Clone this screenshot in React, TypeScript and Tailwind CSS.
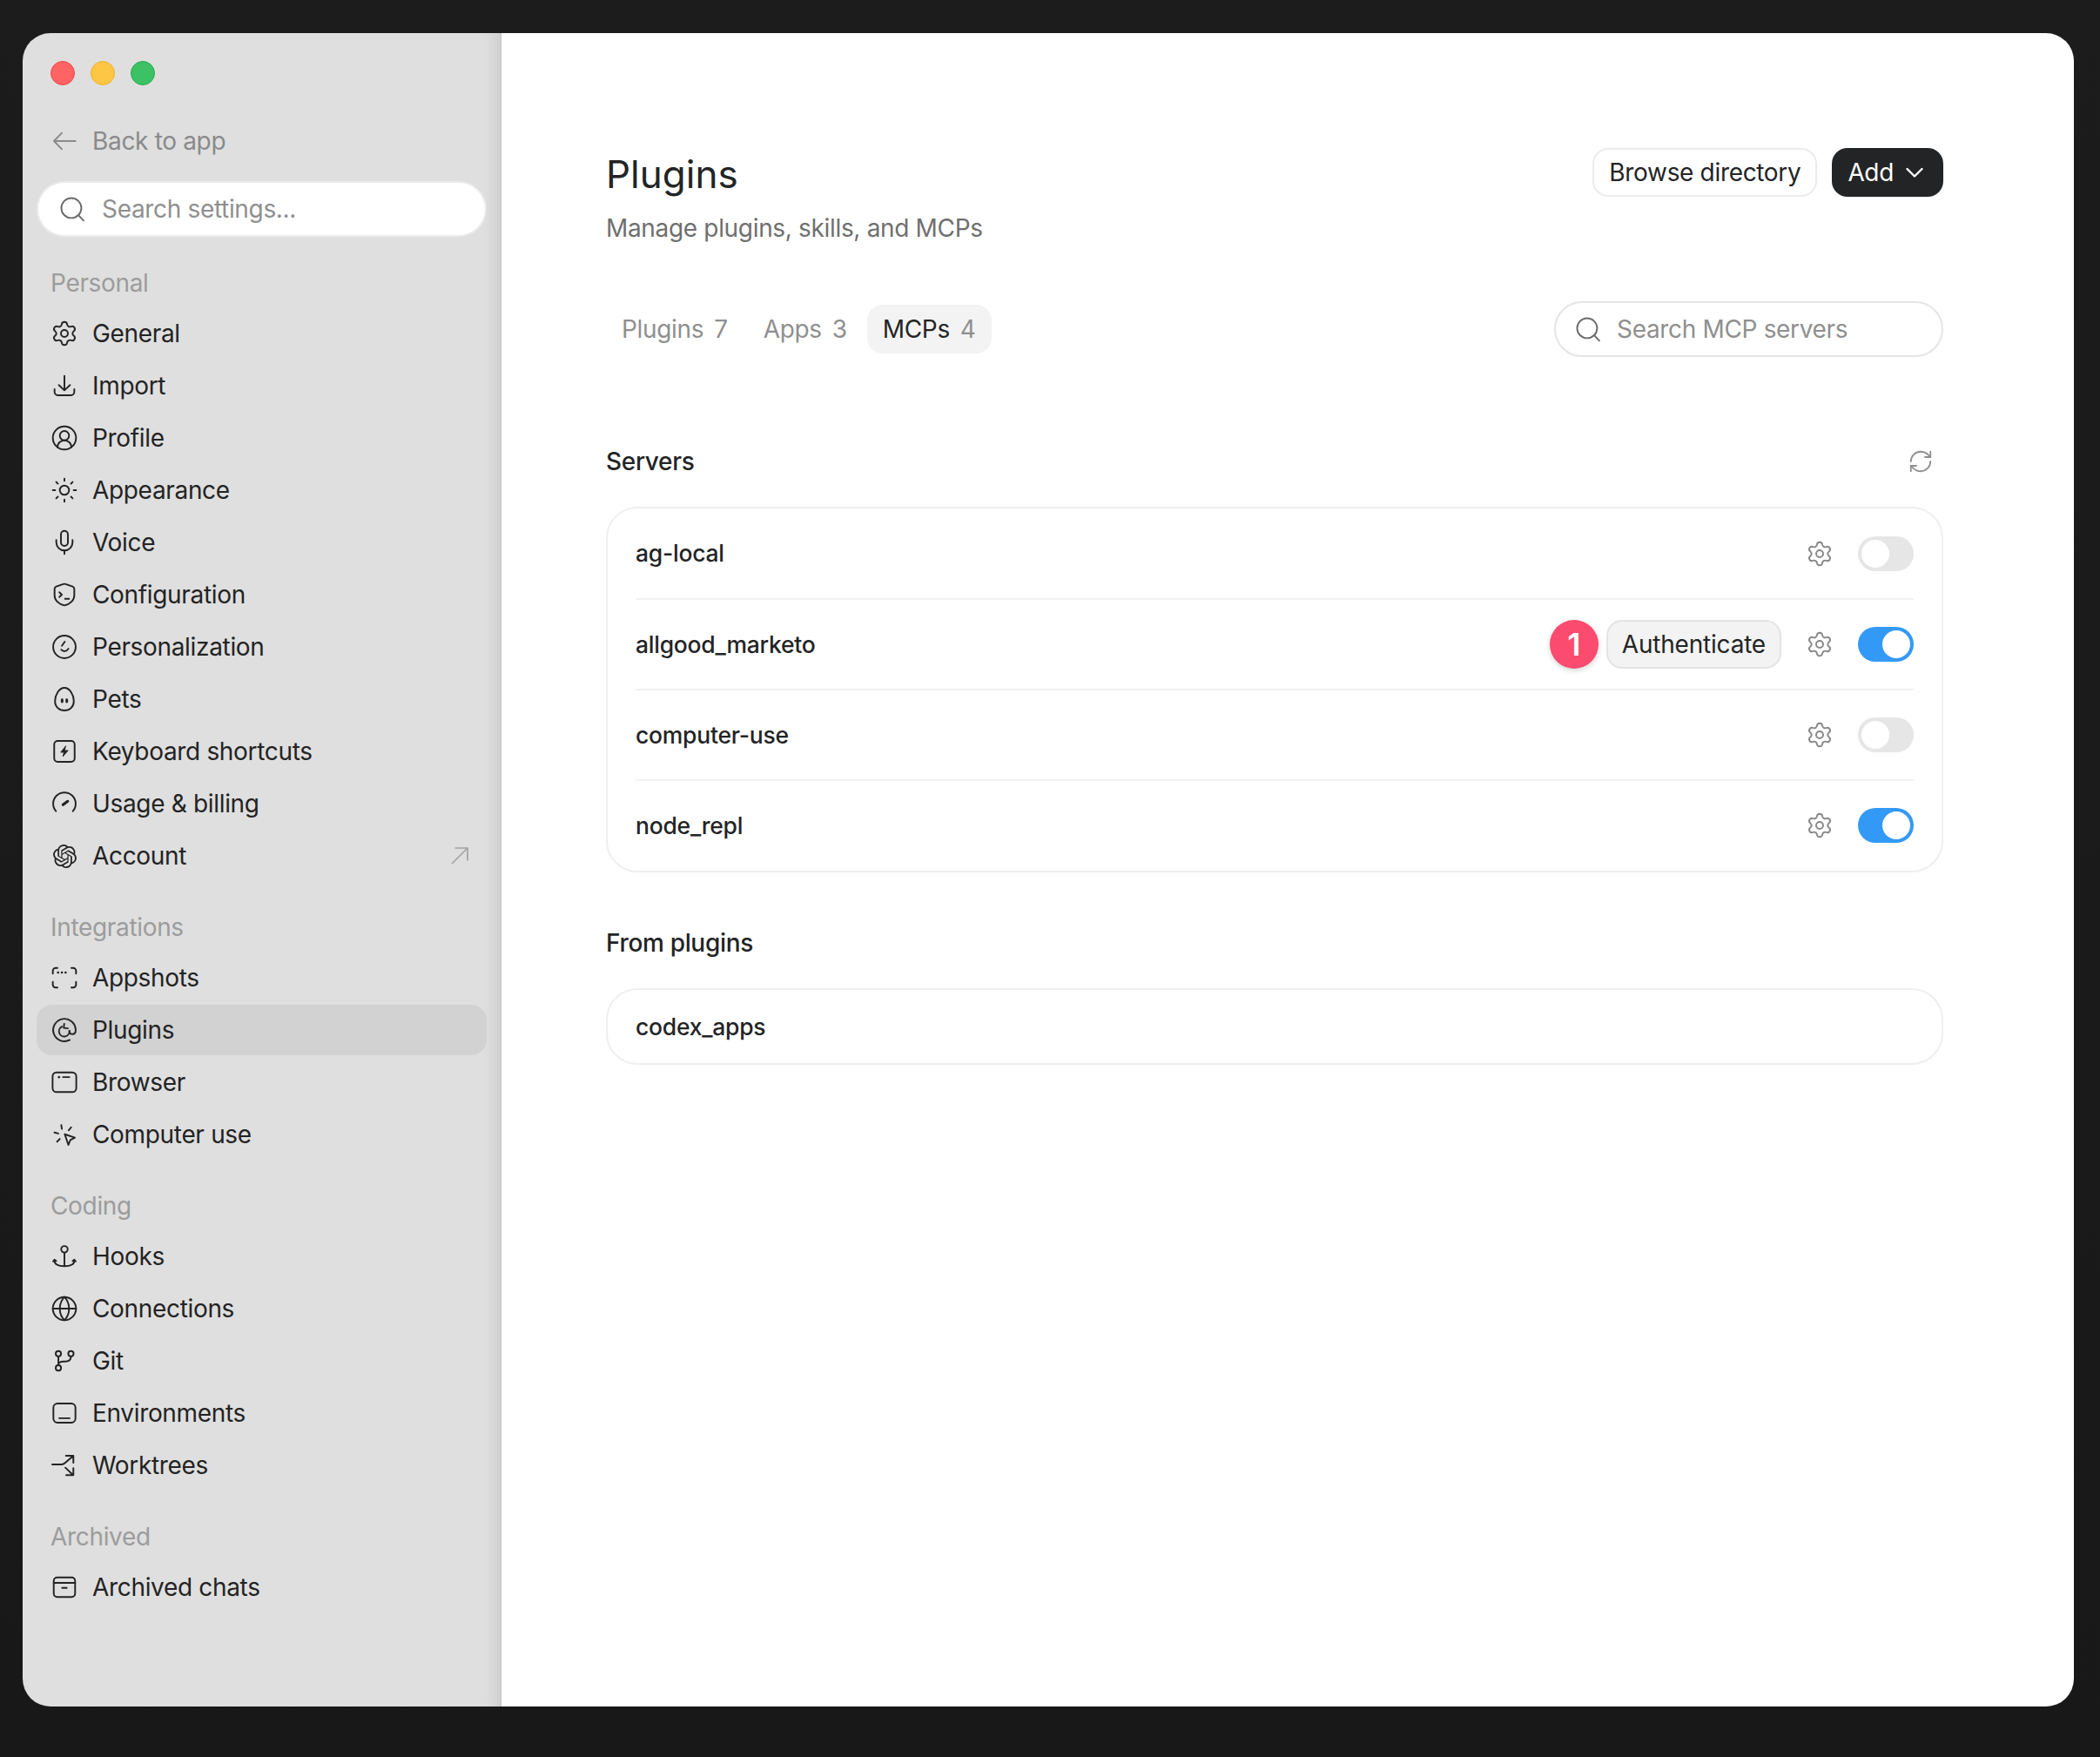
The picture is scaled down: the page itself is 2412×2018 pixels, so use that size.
import type { ReactNode } from "react";
import { Settings, CircleUserRound, Sun, Mic, Globe, RefreshCw } from "lucide-react";
import { SiOpenai } from "react-icons/si";

// hand drawn icons, same 24 box as lucide
function Ico({ children, className = "" }: { children: ReactNode; className?: string }) {
  return (
    <svg
      viewBox="0 0 24 24"
      fill="none"
      stroke="currentColor"
      strokeWidth={1.45}
      strokeLinecap="round"
      strokeLinejoin="round"
      className={`h-[32px] w-[32px] shrink-0 ${className}`}
    >
      {children}
    </svg>
  );
}

const lucideProps = { size: 32, strokeWidth: 1.45, className: "shrink-0" };

const icons: Record<string, ReactNode> = {
  general: <Settings {...lucideProps} />,
  import: (
    <Ico>
      <path d="M12 3.5V16M7.2 11.4 12 16l4.8-4.6M3.5 15v2.5a2.8 2.8 0 0 0 2.8 2.7h11.4a2.8 2.8 0 0 0 2.8-2.7V15" />
    </Ico>
  ),
  profile: <CircleUserRound {...lucideProps} />,
  appearance: <Sun {...lucideProps} />,
  voice: <Mic {...lucideProps} />,
  config: (
    <Ico>
      <path d="M11 2.9a3 3 0 0 1 2 0l6 2.1c1 .4 1.5 1.1 1.5 2.1v5.4c0 4.6-4 7.6-8.5 8.8-4.5-1.2-8.5-4.2-8.5-8.8V7.1c0-1 .5-1.7 1.5-2.1z" />
      <path d="m7.6 10 2.2 2-2.2 2M12.5 15.5H16" />
    </Ico>
  ),
  personalization: (
    <Ico>
      <circle cx="12" cy="12" r="9.7" />
      <path d="m12.3 7.5-2.5 3.6M9.2 14.4c1.8 2 4.8 1.6 6.2-.8" />
    </Ico>
  ),
  pets: (
    <Ico>
      <path d="M12 2.2c4.6 0 8.1 6.2 8.1 11.4 0 5.1-3.6 8.2-8.1 8.2s-8.1-3.1-8.1-8.2C3.9 8.400 7.400 2.200 12 2.200z" />
      <path d="M10 12.600v1.600M14 12.600v1.600" strokeWidth={2.2} />
    </Ico>
  ),
  keyboard: (
    <Ico>
      <rect x="3.2" y="3" width="17.6" height="18" rx="3" />
      <path d="M13 7.5 8.8 12.8h2.8l-1 3.7 4.6-5.3h-2.8z" fill="currentColor" strokeWidth={0.6} />
    </Ico>
  ),
  usage: (
    <Ico>
      <path d="M4.7 18.5a9.700 9.700 0 1 1 14.600 0" />
      <path d="m10.8 13 4-3" strokeWidth={2.4} />
    </Ico>
  ),
  account: <SiOpenai size={27} className="mx-[2.5px] shrink-0" />,
  appshots: (
    <Ico>
      <path d="M2 8.5V6a2.5 2.5 0 0 1 2.5-2.5H6M18 3.5h1.5A2.5 2.5 0 0 1 22 6v2.500M2 15.500V18a2.500 2.500 0 0 0 2.500 2.500H6M22 15.500V18a2.500 2.500 0 0 1-2.500 2.500H18" />
      <path d="M6.5 7.5h.01M9.8 7.5h.01M13 7.5h.01" strokeWidth={2} />
    </Ico>
  ),
  plugins: (
    <Ico>
      <path d="M16.6 20.6A9.700 9.700 0 1 1 21.700 12c0 2.100-1 3.600-2.700 3.600-1.500 0-2.700-1.100-2.700-2.900" />
      <path d="M9.800 9.100A4.500 4.500 0 1 0 16.300 12.700M11.800 6.800l-.4 3.400 3.500.4" />
    </Ico>
  ),
  browser: (
    <Ico>
      <rect x="1.8" y="3.5" width="20.4" height="17" rx="3.5" />
      <path d="M7.3 7.6h.01" strokeWidth={1.9} />
      <path d="M10.8 7.6h5.4" />
    </Ico>
  ),
  computer: (
    <Ico>
      <path d="M12.3 11.8 21 14.7l-3.9 2-1.700 4.300z" />
      <path d="m9.300 3.900.5 3.300M17.800 5.800l-2.100 2.600M3.400 10.300l3.300.9M8 15.800l-2.300 2.400" />
    </Ico>
  ),
  hooks: (
    <Ico>
      <circle cx="12" cy="5.9" r="2.8" />
      <path d="M12 8.700v11.800M3.400 15c-.3 3.700 3 5.500 8.600 5.500s8.900-1.800 8.600-5.500M2.300 16.300l1.100-1.400 1.500 1.100M19.100 16l1.500-1.100 1.100 1.400" />
    </Ico>
  ),
  connections: <Globe {...lucideProps} />,
  git: (
    <Ico>
      <circle cx="6.8" cy="5.9" r="2.3" />
      <circle cx="6.8" cy="18.1" r="2.3" />
      <circle cx="17.6" cy="5.9" r="2.3" />
      <path d="M6.800 8.200v7.600M17.600 8.200c0 3-2 4.300-4.800 4.300h-1.500c-2.400 0-3.900.6-4.500 2.200" />
    </Ico>
  ),
  environments: (
    <Ico>
      <rect x="2.5" y="3.8" width="19" height="16.4" rx="3.5" />
      <path d="M7.5 16.4h9" />
    </Ico>
  ),
  worktrees: (
    <Ico>
      <path d="M1.500 11.200h8c1.300 0 2.200-.5 3-1.300l7-6M13.300 3.700h6.400v6.100M12.800 14l6.700 6.400M19.700 14.500v6h-6.200" />
    </Ico>
  ),
  archive: (
    <Ico>
      <rect x="2.8" y="3.5" width="18.4" height="17" rx="3" />
      <path d="M2.8 8.2h18.4M10 12.6h4" />
    </Ico>
  ),
};

type NavItem = { id: string; label: string; active?: boolean; external?: boolean };

const groups: { title: string; items: NavItem[] }[] = [
  {
    title: "Personal",
    items: [
      { id: "general", label: "General" },
      { id: "import", label: "Import" },
      { id: "profile", label: "Profile" },
      { id: "appearance", label: "Appearance" },
      { id: "voice", label: "Voice" },
      { id: "config", label: "Configuration" },
      { id: "personalization", label: "Personalization" },
      { id: "pets", label: "Pets" },
      { id: "keyboard", label: "Keyboard shortcuts" },
      { id: "usage", label: "Usage & billing" },
      { id: "account", label: "Account", external: true },
    ],
  },
  {
    title: "Integrations",
    items: [
      { id: "appshots", label: "Appshots" },
      { id: "plugins", label: "Plugins", active: true },
      { id: "browser", label: "Browser" },
      { id: "computer", label: "Computer use" },
    ],
  },
  {
    title: "Coding",
    items: [
      { id: "hooks", label: "Hooks" },
      { id: "connections", label: "Connections" },
      { id: "git", label: "Git" },
      { id: "environments", label: "Environments" },
      { id: "worktrees", label: "Worktrees" },
    ],
  },
  {
    title: "Archived",
    items: [{ id: "archive", label: "Archived chats" }],
  },
];

const servers = [
  { name: "ag-local", on: false },
  { name: "allgood_marketo", on: true, auth: true },
  { name: "computer-use", on: false },
  { name: "node_repl", on: true },
];

const tabs = [
  { label: "Plugins", count: 7 },
  { label: "Apps", count: 3 },
  { label: "MCPs", count: 4, active: true },
];

function SearchIcon() {
  return (
    <Ico className="text-[#6b6b6b]">
      <circle cx="11.2" cy="11.2" r="8.6" />
      <path d="m17.5 17.5 4.2 4.5" />
    </Ico>
  );
}

function Toggle({ on }: { on: boolean }) {
  return (
    <div
      className={
        on
          ? "flex h-[40px] w-[64px] shrink-0 items-center justify-end rounded-full bg-[#3399f7] p-[4px]"
          : "flex h-[40px] w-[64px] shrink-0 items-center justify-start rounded-full bg-[#e6e6e6] p-[4px]"
      }
    >
      <div className="h-[32px] w-[32px] rounded-full bg-white" />
    </div>
  );
}

function Sidebar() {
  return (
    <aside className="flex w-[550px] shrink-0 flex-col border-r border-[#c4c4c4] bg-[#dfdfdf] px-[16px] pt-[32px] shadow-[inset_-22px_0_22px_-22px_rgba(0,0,0,0.14)]">
      <div className="flex gap-[18px] pl-[16px]">
        <div className="h-[28px] w-[28px] rounded-full border border-[#ef4a45] bg-[#ff6363]" />
        <div className="h-[28px] w-[28px] rounded-full border border-[#f2b02e] bg-[#fdc644]" />
        <div className="h-[28px] w-[28px] rounded-full border border-[#22ac4c] bg-[#3dc165]" />
      </div>

      <div className="mt-[35px] flex h-[58px] items-center gap-[16px] pl-[16px] text-[#8a8a8a]">
        <Ico>
          <path d="M21.5 12H3M9.8 5 3 12l6.8 7" />
        </Ico>
        <span>Back to app</span>
      </div>

      <div className="mx-[2px] mt-[19px] flex h-[60px] items-center gap-[18px] rounded-full bg-white pl-[23px] ring-2 ring-[#ebebeb]">
        <SearchIcon />
        <span className="text-[#8f8f8f]">Search settings...</span>
      </div>

      <nav className="mt-[2px]">
        {groups.map((group) => (
          <div key={group.title} className="mt-[35px]">
            <div className="flex h-[36px] items-center pl-[16px] text-[#9c9c9c]">{group.title}</div>
            <div className="mt-[11px] flex flex-col gap-[2px]">
              {group.items.map((item) => (
                <div
                  key={item.id}
                  className={
                    item.active
                      ? "flex h-[58px] items-center gap-[16px] rounded-[18px] bg-[#d2d2d2] pl-[16px] pr-[21px] text-[#232323]"
                      : "flex h-[58px] items-center gap-[16px] rounded-[18px] pl-[16px] pr-[21px] text-[#232323]"
                  }
                >
                  {icons[item.id]}
                  <span className="flex-1">{item.label}</span>
                  {item.external && (
                    <svg viewBox="0 0 20 20" fill="none" stroke="#a3a3a3" strokeWidth={1.7} className="h-[20px] w-[20px]">
                      <path d="M1 19 19 1M4.5 1H19v14.5" />
                    </svg>
                  )}
                </div>
              ))}
            </div>
          </div>
        ))}
      </nav>
    </aside>
  );
}

function Main() {
  return (
    <main className="flex min-w-0 flex-1 flex-col bg-white pl-[120px] pr-[150px] pt-[132px]">
      <div className="flex items-start justify-between">
        <div>
          <h1 className="flex h-[60px] items-center text-[44px] font-normal tracking-normal text-[#232425]">Plugins</h1>
          <p className="mt-[12px] flex h-[40px] items-center text-[#6f6f6f]">Manage plugins, skills, and MCPs</p>
        </div>
        <div className="flex items-center gap-[17px]">
          <button type="button" className="flex h-[56px] items-center rounded-[18px] border-2 border-[#ececec] px-[17px] tracking-[-0.33px] text-[#232425]">
            Browse directory
          </button>
          <button type="button" className="flex h-[56px] items-center gap-[12px] rounded-[18px] bg-[#232425] pl-[18px] pr-[21px] tracking-[-0.33px] text-white">
            Add
            <svg viewBox="0 0 24 24" fill="none" stroke="currentColor" strokeWidth={2.4} strokeLinecap="round" strokeLinejoin="round" className="h-[24px] w-[24px]">
              <path d="m3.5 8 8.500 8.500L20.500 8" />
            </svg>
          </button>
        </div>
      </div>

      <div className="mt-[64px] flex h-[64px] items-center justify-between">
        <div className="flex items-center gap-[5px]">
          {tabs.map((tab) => (
            <div
              key={tab.label}
              className={
                tab.active
                  ? "flex h-[56px] items-center gap-[12px] rounded-[18px] bg-[#f3f3f3] px-[18px] text-[#232425]"
                  : "flex h-[56px] items-center gap-[12px] rounded-[18px] px-[18px] text-[#8f8f8f]"
              }
            >
              <span>{tab.label}</span>
              <span className="text-[#8f8f8f]">{tab.count}</span>
            </div>
          ))}
        </div>
        <div className="flex h-[64px] w-[447px] items-center gap-[17px] rounded-full border-2 border-[#e5e5e5] pl-[21px]">
          <SearchIcon />
          <span className="text-[#8f8f8f]">Search MCP servers</span>
        </div>
      </div>

      <div className="mt-[100px] flex h-[40px] items-center justify-between">
        <h2 className="font-medium text-[#232425]">Servers</h2>
        <RefreshCw size={30} strokeWidth={1.45} className="mr-[11px] text-[#8e8e8e]" />
      </div>

      <div className="mt-[32px] rounded-[36px] border-2 border-[#efefef] pb-[1px] pl-[32px] pr-[32px]">
        {servers.map((server, i) => (
          <div
            key={server.name}
            className={
              i === 0
                ? "flex h-[103px] items-center text-[26.5px] font-medium tracking-[-0.25px] text-[#232425]"
                : "flex h-[104px] items-center border-t-2 border-[#f1f1f1] text-[26.5px] font-medium tracking-[-0.25px] text-[#232425]"
            }
          >
            <span className="flex-1">{server.name}</span>
            {server.auth && (
              <div className="mr-[28px] flex items-center gap-[9px]">
                <div className="flex h-[56px] w-[56px] items-center justify-center rounded-full bg-[#fb4b6e] text-[36px] font-semibold text-white shadow-[0_2px_6px_rgba(0,0,0,0.18)]">
                  1
                </div>
                <button type="button" className="flex h-[56px] items-center rounded-[18px] border-2 border-[#e4e4e4] bg-[#f3f3f3] px-[16px] text-[28px] font-normal tracking-[-0.2px] text-[#232425]">
                  Authenticate
                </button>
              </div>
            )}
            <Settings size={32} strokeWidth={1.45} className="mr-[28px] shrink-0 text-[#878787]" />
            <Toggle on={server.on} />
          </div>
        ))}
      </div>

      <h2 className="mt-[61px] flex h-[40px] items-center font-medium text-[#232425]">From plugins</h2>

      <div className="mt-[32px] flex h-[88px] items-center rounded-[36px] border-2 border-[#efefef] px-[32px] text-[26.5px] font-medium tracking-[-0.25px] text-[#232425]">
        codex_apps
      </div>
    </main>
  );
}

export default function App() {
  return (
    <div className="h-[2018px] w-[2412px] overflow-hidden bg-gradient-to-b from-[#1c1c1c] to-[#181818] pl-[26px] pt-[38px] font-[Inter,sans-serif] text-[28px] leading-none tracking-[-0.33px]">
      <div className="flex h-[1922px] w-[2356px] overflow-hidden rounded-[32px]">
        <Sidebar />
        <Main />
      </div>
    </div>
  );
}
